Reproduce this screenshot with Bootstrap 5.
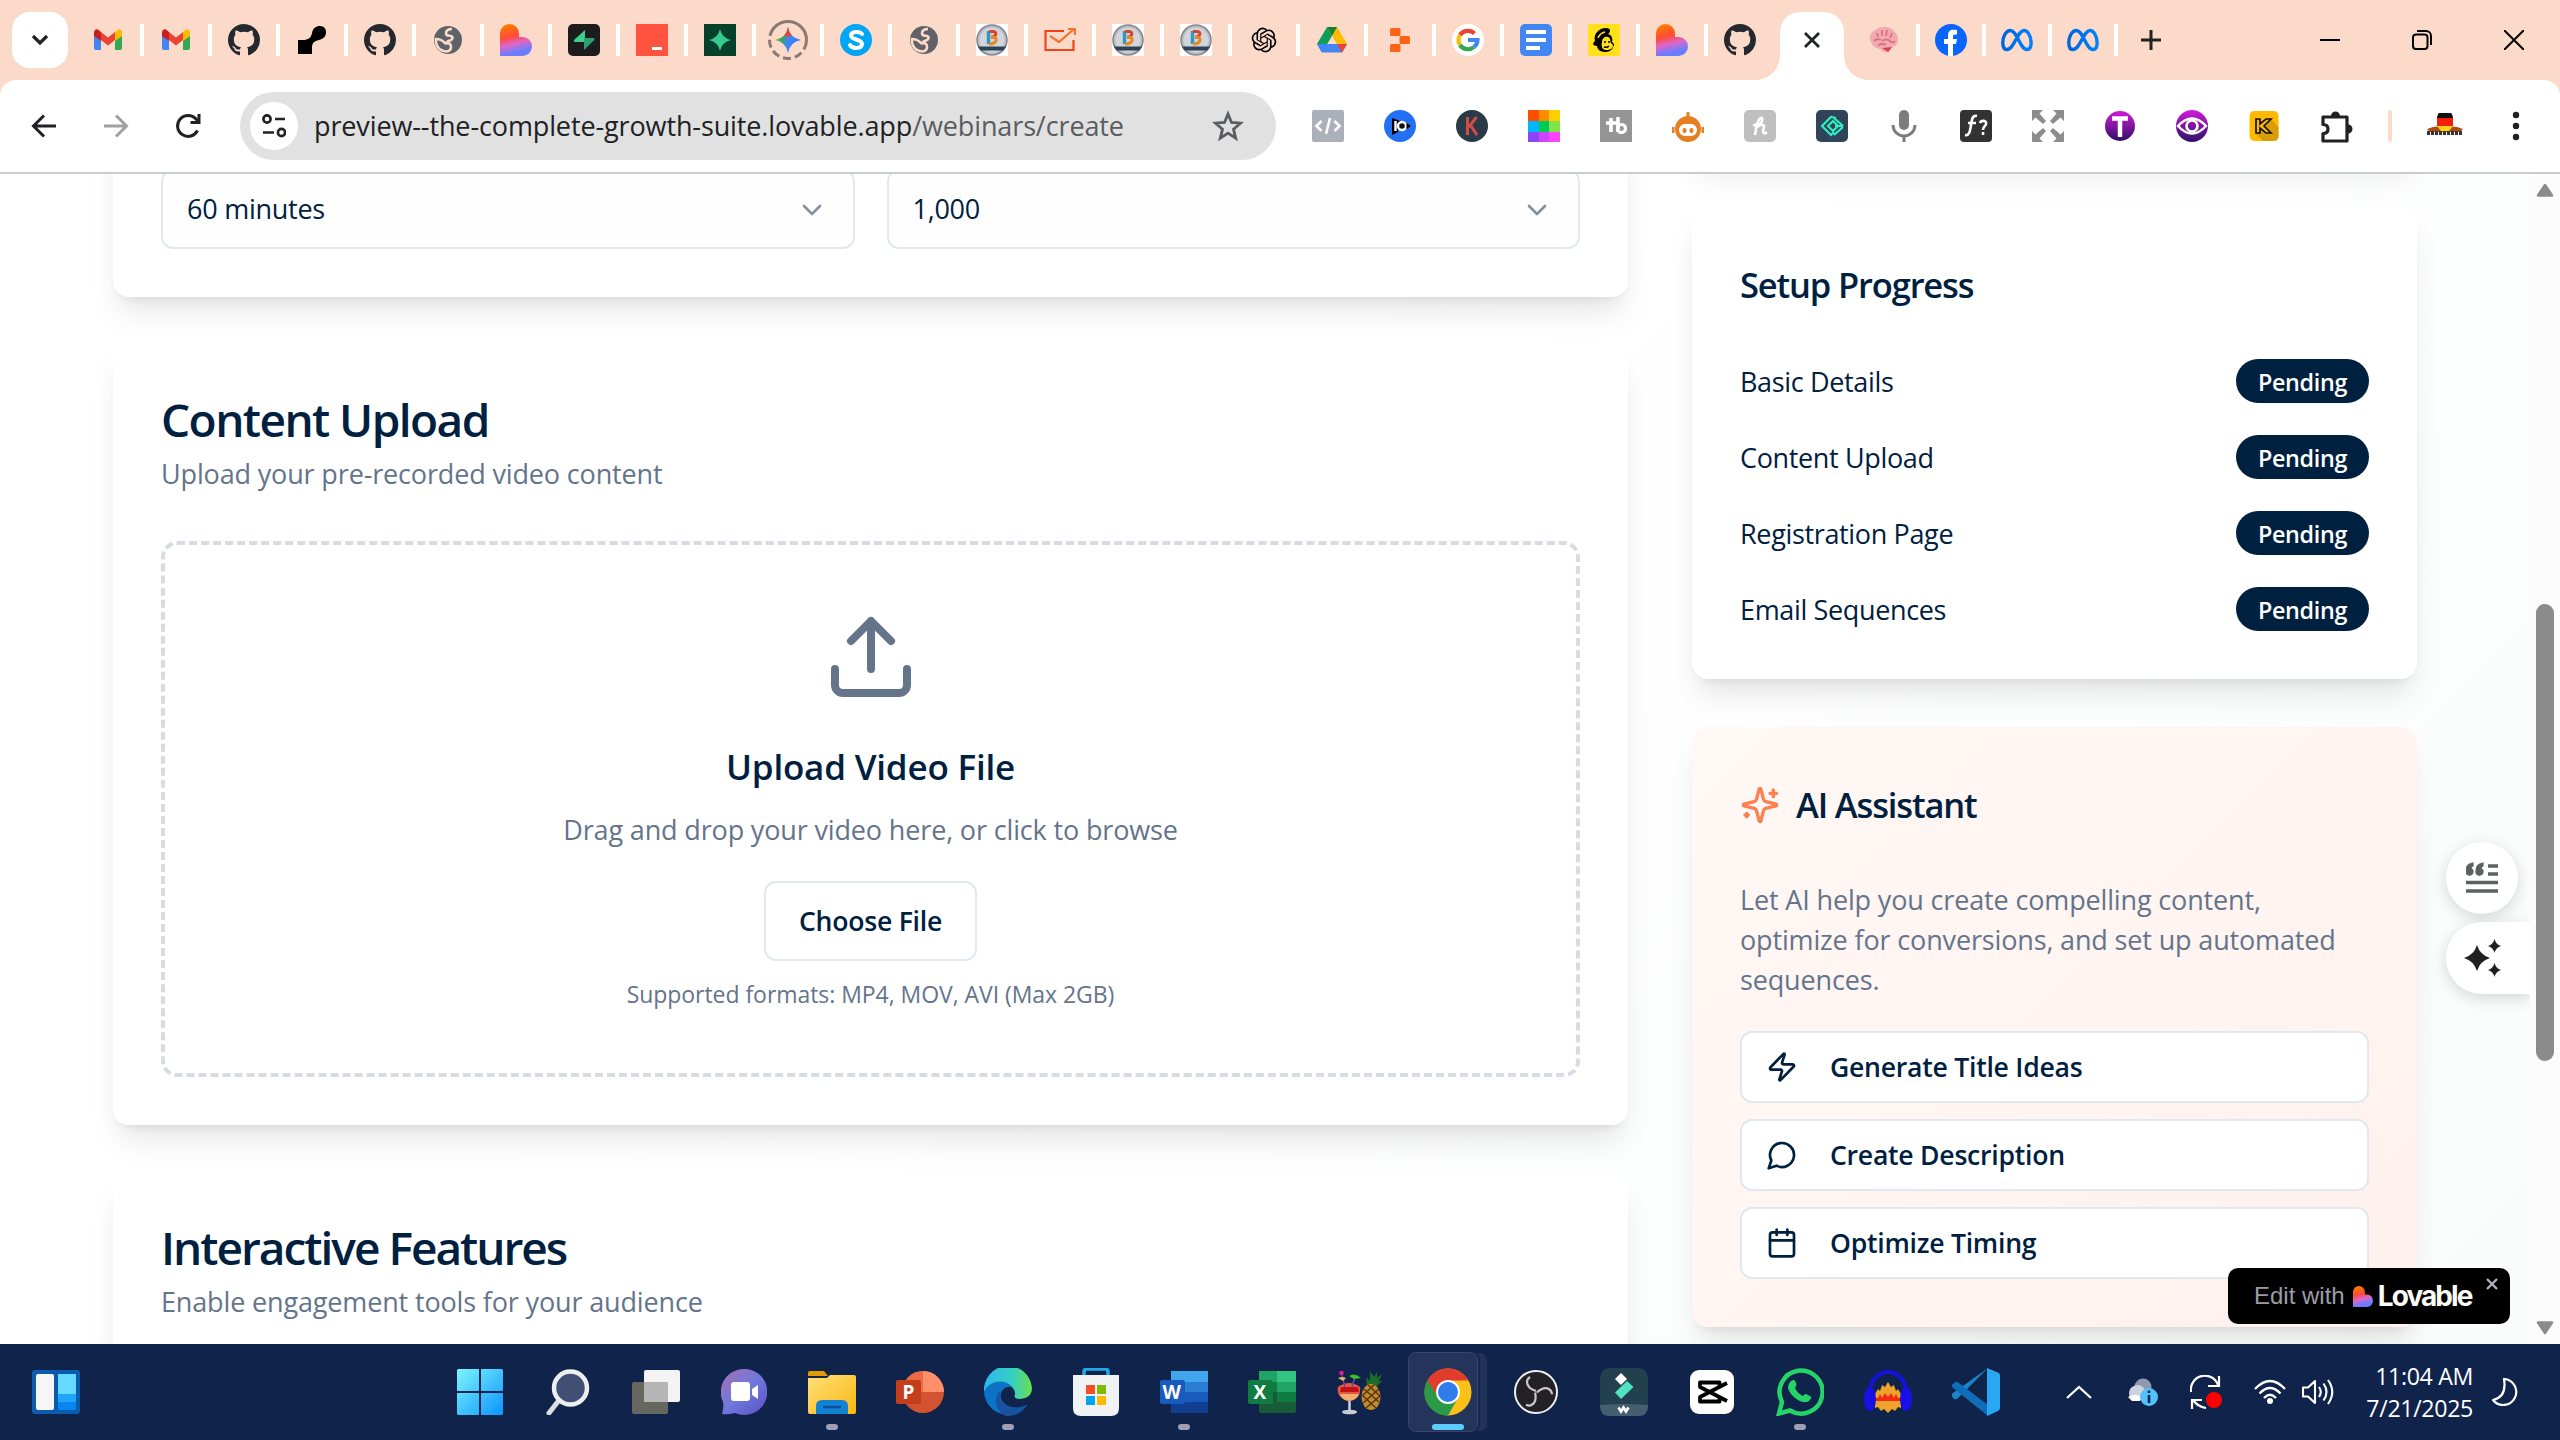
<!DOCTYPE html>
<html lang="en">
<head>
<meta charset="utf-8">
<title>Create webinar</title>
<link href="https://cdn.jsdelivr.net/npm/bootstrap@5.3.0/dist/css/bootstrap.min.css" rel="stylesheet">
<style>
:root{--ink:#00203f;--soft:#64748b;--line:#e2e8f0}
body{width:2560px;height:1440px;overflow:hidden;font-family:"Open Sans","Noto Sans",sans-serif;color:var(--ink);background:#fff}
svg{display:block;flex:none}
.ln{fill:none;stroke:currentColor;stroke-width:2;stroke-linecap:round;stroke-linejoin:round}
/* tab strip */
.strip{height:80px;background:#fcdac9;padding-left:12px}
.tabmenu{width:56px;height:56px;border-radius:18px;background:#fff;margin-right:8px}
.tabcell{width:68px;height:32px;border-right:4px solid #fff}
.tabcell.slim{width:66px}
.tabcell.bare{border-color:transparent}
.tabcell.near{width:66px;border:0}
.livetab{width:64px;height:68px;background:#fff;border-radius:20px 20px 0 0;margin-top:12px;padding-bottom:12px;position:relative;color:#202124}
.livetab:before,.livetab:after{content:"";position:absolute;bottom:0;width:24px;height:24px}
.livetab:before{left:-24px;background:radial-gradient(circle at 0 0,transparent 23.5px,#fff 24px)}
.livetab:after{right:-24px;background:radial-gradient(circle at 100% 0,transparent 23.5px,#fff 24px)}
.wincell{width:92px}
/* toolbar */
.barwrap{background:#fcdac9}
.toolbar{height:94px;background:#fff;border-bottom:2px solid #c9cccd;border-radius:16px 16px 0 0;padding-left:8px;color:#202124}
.navcell{width:72px}
.omni{width:1036px;height:68px;border-radius:34px;background:#e1e1e1;margin-left:16px;padding:0 32px 0 10px;font-size:27px;letter-spacing:-.12px}
.omni .chip{width:48px;height:48px;border-radius:50%;background:#fff;margin-right:16px}
.omni .tail{color:#5a5c5f}
.extcell{width:72px;height:32px}
.extbar{margin-left:16px}
.extrule{width:4px;height:32px;background:#fcdac9;border-radius:2px;margin:0 34px 0 16px}
/* page */
.pagearea{height:1170px;background:linear-gradient(135deg,#fff 40%,#fafcfb)}
.maincol{width:1515px;margin:-53px 64px 0 113px}
.sidecol{width:725px;margin-top:-53px}
.panel{border:0;border-radius:16px;padding:48px;margin-bottom:48px;color:var(--ink);box-shadow:0 20px 30px -6px rgba(0,0,0,.1),0 8px 12px -8px rgba(0,0,0,.1)}
.panel.cut{height:38px;padding:0}
.pick{height:80px;border:2px solid var(--line);border-radius:12px;padding:1px 30px 0 24px;font-size:27px;letter-spacing:-.25px;background:#fefefe}
.pick svg{color:#8490a0}
.h-big{font-size:46px;line-height:48px;font-weight:600;letter-spacing:-1.7px;margin:0 0 12px;padding-top:2px;height:48px}
.h-big.wide{letter-spacing:-1.55px}
.h-big.tight{letter-spacing:-2px}
.sub{font-size:27px;line-height:40px;letter-spacing:-.15px;color:var(--soft);padding-top:1px;margin:0 0 -1px}
.drop{border:4px dashed #d8dbe3;border-radius:16px;margin-top:48px;padding:64px 0}
.drop svg{color:#64748b;margin-bottom:32px}
.drop h3{font-size:35px;line-height:56px;font-weight:600;letter-spacing:-.2px;padding-top:2px;margin:0 0 14px}
.btn.pill{border:2px solid var(--line);border-radius:12px;background:#fff;color:var(--ink);font-size:26.6px;font-weight:600;letter-spacing:-.25px;line-height:40px}
.choose{width:213px;height:80px;margin:32px 0 16px;padding:0}
.note{font-size:23px;line-height:32px;letter-spacing:-.05px;color:var(--soft);padding-top:1px;margin:0 0 -1px}
.h-mid{font-size:34.5px;line-height:56px;font-weight:600;letter-spacing:-1.150px;padding-top:2px;margin:0 0 46px}
.steps{gap:32px}
.steps li{height:44px;font-size:27px;letter-spacing:-.35px;line-height:46px}
.steps li span:first-child{padding-top:2px}
.badge.pend{background:var(--ink);width:133px;height:44px;border-radius:22px;font-size:23.3px;font-weight:600;line-height:47px;padding:0;letter-spacing:-.3px}
.ai{background:linear-gradient(135deg,#fff8f5,#fff1ed)}
.ai .sub{margin-bottom:31px}
.ai .btn{height:72px;padding:0 24px;gap:32px}
.ai .h-mid svg{color:#ff7f50}
/* scrollbar */
.scroller{width:30px;margin-left:auto;background:#fcfcfc;padding:9px 0}
.scroller .thumb{width:18px;height:457px;border-radius:9px;background:#8b8b8b;margin-top:407px}
/* overlays */
.bub{position:absolute;left:2446px;width:72px;height:72px;background:#fff;box-shadow:0 4px 16px rgba(0,0,0,.16)}
.bub.one{top:842px;border-radius:36px;color:#5f6062}
.bub.two{top:922px;width:84px;border-radius:36px 0 0 36px;padding-right:12px;color:#202020;clip-path:inset(-30px 0 -30px -30px)}
.lov{position:absolute;left:2228px;top:1268px;width:282px;height:56px;border-radius:10px;background:#000;color:#9c9ca5;font:24px "Liberation Sans",sans-serif;padding:0 0 0 26px}
.lov b{color:#fcfbf8;font:bold 28px Inter,"Liberation Sans",sans-serif;letter-spacing:-1.9px;margin-left:5px}
.lov .heart{margin-left:8px}
.lov .shut{position:absolute;right:12px;top:10px}
/* taskbar */
.dock{height:96px;background:#10234b;color:#fff}
.widgets{margin:0 356px 0 32px}
.appcell{width:88px;height:96px;position:relative}
.appcell.open:after{content:"";position:absolute;left:38px;top:80px;width:12px;height:6px;border-radius:3px;background:#9a9fb4}
.appcell.live:after{content:"";position:absolute;left:28px;top:80px;width:32px;height:6px;border-radius:3px;background:#5ccbff}
.appcell.live:before{content:"";position:absolute;left:4px;top:8px;width:70px;height:80px;border-radius:8px;background:#24355b;border:1px solid #344567;box-shadow:2px 0 0 #15274e,10px 0 0 -1px #22335a}
.appcell svg{position:relative}
.tray{padding-right:42px}
.when{font-size:23.2px;line-height:32px;width:137px;letter-spacing:-.35px;margin-right:19px}
</style>
<script src="https://cdn.jsdelivr.net/npm/bootstrap@5.3.0/dist/js/bootstrap.bundle.min.js"></script>
</head>
<body class="d-flex flex-column">
<svg width="0" height="0" class="position-absolute">
<defs>
<linearGradient id="gLov" x1="0" y1="0" x2=".25" y2="1"><stop offset=".1" stop-color="#ff7a00"/><stop offset=".45" stop-color="#ff4a3a"/><stop offset=".68" stop-color="#e065c8"/><stop offset=".95" stop-color="#6a7dff"/></linearGradient>
<linearGradient id="gWin" x1="0" y1="0" x2="1" y2="1"><stop stop-color="#7df5ff"/><stop offset="1" stop-color="#0a94ff"/></linearGradient>
<linearGradient id="gPur" x1="0" y1="0" x2="0" y2="1"><stop stop-color="#d21bdc"/><stop offset="1" stop-color="#2c0f62"/></linearGradient>
<linearGradient id="gGem" x1="0" y1="0" x2="1" y2=".3"><stop stop-color="#fbbc04"/><stop offset=".35" stop-color="#34a853"/><stop offset=".6" stop-color="#4285f4"/><stop offset="1" stop-color="#2b7bff"/></linearGradient>
<linearGradient id="gFold" x1="0" y1="0" x2="1" y2="1"><stop stop-color="#ffe07a"/><stop offset="1" stop-color="#fbb80f"/></linearGradient>
<linearGradient id="gChat" x1="0" y1="0" x2="1" y2="1"><stop stop-color="#a76fae"/><stop offset=".5" stop-color="#7078dd"/><stop offset="1" stop-color="#5a4fc4"/></linearGradient>
<linearGradient id="gEdge" x1="0" y1="0" x2="1" y2="0"><stop stop-color="#2fb8f0"/><stop offset=".6" stop-color="#36cfc0"/><stop offset="1" stop-color="#6be04a"/></linearGradient>
<linearGradient id="gMeta" x1="0" y1="0" x2="1" y2="0"><stop stop-color="#0064e0"/><stop offset="1" stop-color="#0082fb"/></linearGradient>
<symbol id="gmail" viewBox="0 0 32 32"><path d="M2 8v16a2 2 0 0 0 2 2h5V13z" fill="#4285f4"/><path d="M30 8v16a2 2 0 0 1-2 2h-5V13z" fill="#34a853"/><path d="M9 8v8l7 5.500 7-5.500V8l-7 5.500z" fill="#ea4335"/><path d="M2 9v3l7 5V8L6 5.600C4 4.400 2 6 2 9z" fill="#c5221f"/><path d="M30 9v3l-7 5V8l3-2.400C28 4.400 30 6 30 9z" fill="#fbbc04"/></symbol>
<symbol id="github" viewBox="0 0 16 16"><path fill="#24292f" d="M8 0C3.580 0 0 3.580 0 8c0 3.540 2.290 6.530 5.470 7.590.4.070.55-.17.55-.38 0-.19-.010-.82-.010-1.490-2.010.37-2.530-.49-2.690-.94-.090-.23-.48-.94-.82-1.130-.28-.15-.68-.52-.010-.53.630-.010 1.080.58 1.230.82.720 1.210 1.870.87 2.330.66.070-.52.280-.87.510-1.070-1.780-.2-3.640-.89-3.640-3.950 0-.87.310-1.590.82-2.150-.080-.2-.36-1.020.080-2.120 0 0 .67-.21 2.200.82.640-.18 1.320-.27 2-.27s1.360.090 2 .27c1.530-1.040 2.200-.82 2.200-.82.440 1.100.160 1.920.080 2.120.510.560.82 1.270.82 2.150 0 3.070-1.870 3.750-3.650 3.950.290.250.540.730.540 1.480 0 1.070-.010 1.930-.010 2.200 0 .21.150.460.550.38A8 8 0 0 0 16 8c0-4.420-3.580-8-8-8z"/></symbol>
<symbol id="curl" viewBox="0 0 32 32"><path d="M2 30V16h5c5 0 8-2 9-7 1-5 4-7 8-7 4 0 6 3 6 6 0 5-3 7-7 8-5 1-7 3-7 8v6z"/></symbol>
<symbol id="globe" viewBox="0 0 32 32"><circle cx="16" cy="16" r="14" fill="#5f6368"/><path d="M20 5c-4 0-6 1.500-6 4.500 0 2.500 3 2 5 2.500 3 1 1 4-1 4.500-1.500.5-3 .5-3 2.500 2 0 4 1 4 4 0 2-1.500 4-4 4.500-6 0-9-3-10.500-7-1-3-.5-4-.5-5.500 4.500 0 6.500 1.500 8.500 3.500 1.500 1.500 3 1 3-.5" fill="none" stroke="#fcdac9" stroke-width="2.600"/></symbol>
<symbol id="lovable" viewBox="0 0 32 32"><path fill="url(#gLov)" d="M0 32V9.500A9.500 9.500 0 0 1 19 9.500V13h3.500a9.500 9.500 0 0 1 0 19z"/></symbol>
<symbol id="supa" viewBox="0 0 32 32"><rect width="32" height="32" rx="5" fill="#1c1c1c"/><path d="M17 6v12H7c-1 0-1.500-1-1-2z" fill="#3ecf8e"/><path d="M16 26V14h9.500c1 0 1.500 1 .8 2z" fill="#2f9e6e"/></symbol>
<symbol id="redbox" viewBox="0 0 32 32"><path d="M0 0h32v32H0z" fill="#ff5340"/><path d="M16 23h10v3H16z" fill="#fff"/></symbol>
<symbol id="greenbox" viewBox="0 0 32 32"><path d="M0 0h32v32H0z" fill="#04402c"/><path d="M16 5q2 9 11 11-9 2-11 11-2-9-11-11 9-2 11-11z" fill="#35c98b"/></symbol>
<symbol id="gem" viewBox="0 0 40 40"><circle cx="20" cy="20" r="18.500" fill="none" stroke="#8b7973" stroke-width="3" stroke-dasharray="10 4 8 4 8 4 8 4 8 4 60 0"/><path d="M20 7q2 11 13 13-11 2-13 13-2-11-13-13 11-2 13-13z" fill="url(#gGem)"/><path d="M20 7q1 6 4 9-4 1-8 0 3-3 4-9z" fill="#ea4335"/></symbol>
<symbol id="skype" viewBox="0 0 32 32"><circle cx="16" cy="16" r="16" fill="#00a5f4"/><path d="M22 10c-2-3-11-3-11 1.500 0 5 11 3 11 8.500 0 5-10 5-12 1" fill="none" stroke="#fff" stroke-width="4" stroke-linecap="round"/></symbol>
<symbol id="bcoin" viewBox="0 0 32 32"><path d="M0 0h32v32H0z" fill="#fff"/><circle cx="16" cy="16" r="15" fill="#b9bcc2" stroke="#85888e" stroke-width="1.500"/><circle cx="16" cy="16" r="12.500" fill="#d3d5da"/><path d="M12.500 7v13" stroke="#2a9bc7" stroke-width="3.400"/><path d="M13 7.500h4q4 .5 2.500 3.500-1 2-4.500 2.500" fill="none" stroke="#d8452e" stroke-width="3"/><path d="M15 13q6 0 5 3.500-1 3.500-7 3.500" stroke="#e78a22" stroke-width="3" fill="none"/><path d="M2 22.500h28q-1 2-3 4H5q-2-2-3-4z" fill="#2c4257"/></symbol>
<symbol id="chk" viewBox="0 0 32 32"><g fill="none" stroke-width="2.200"><path d="M20 7H1.500v19h28V16" stroke="#f0431c"/><path d="m6 12 9 6L30 5M24 5h7v6" stroke="#f5732a"/></g></symbol>
<symbol id="gpt" viewBox="-3.500 -3.500 31 31"><path d="M22.2819 9.8211a5.9847 5.9847 0 0 0-.5157-4.9108 6.0462 6.0462 0 0 0-6.5098-2.9A6.0651 6.0651 0 0 0 4.9807 4.1818a5.9847 5.9847 0 0 0-3.9977 2.9 6.0462 6.0462 0 0 0 .7427 7.0966 5.98 5.98 0 0 0 .511 4.9107 6.051 6.051 0 0 0 6.5146 2.9001A5.9847 5.9847 0 0 0 13.2599 24a6.0557 6.0557 0 0 0 5.7718-4.2058 5.9894 5.9894 0 0 0 3.9977-2.9001 6.0557 6.0557 0 0 0-.7475-7.0729zm-9.022 12.6081a4.4755 4.4755 0 0 1-2.8764-1.0408l.1419-.0804 4.7783-2.7582a.7948.7948 0 0 0 .3927-.6813v-6.7369l2.02 1.1686a.071.071 0 0 1 .038.052v5.5826a4.504 4.504 0 0 1-4.4945 4.4944zm-9.6607-4.1254a4.4708 4.4708 0 0 1-.5346-3.0137l.142.0852 4.783 2.7582a.7712.7712 0 0 0 .7806 0l5.8428-3.3685v2.3324a.0804.0804 0 0 1-.0332.0615L9.74 19.9502a4.4992 4.4992 0 0 1-6.1408-1.6464zM2.3408 7.8956a4.485 4.485 0 0 1 2.3655-1.9728V11.6a.7664.7664 0 0 0 .3879.6765l5.8144 3.3543-2.0201 1.1685a.0757.0757 0 0 1-.071 0l-4.8303-2.7865A4.504 4.504 0 0 1 2.3408 7.872zm16.5963 3.8558L13.1038 8.364 15.1192 7.2a.0757.0757 0 0 1 .071 0l4.8303 2.7913a4.4944 4.4944 0 0 1-.6765 8.1042v-5.6772a.79.79 0 0 0-.407-.667zm2.0107-3.0231l-.142-.0852-4.7735-2.7818a.7759.7759 0 0 0-.7854 0L9.409 9.2297V6.8974a.0662.0662 0 0 1 .0284-.0615l4.8303-2.7866a4.4992 4.4992 0 0 1 6.6802 4.66zM8.3065 12.863l-2.02-1.1638a.0804.0804 0 0 1-.038-.0567V6.0742a4.4992 4.4992 0 0 1 7.3757-3.4537l-.142.0805L8.704 5.459a.7948.7948 0 0 0-.3927.6813zm1.0976-2.3654l2.602-1.4998 2.6069 1.4998v2.9994l-2.5974 1.4997-2.6067-1.4997Z"/></symbol>
<symbol id="drive" viewBox="0 0 32 32"><path d="M11 3h10l10 17H21z" fill="#ffba00"/><path d="M11 3 1 20l5 8.500L16 12z" fill="#0c9d58"/><path d="M11 3h10l-5 9z" fill="#188038"/><path d="M11 20h20l-5 8.500H6L1 20z" fill="#4285f4"/><path d="M21 20h10l-5 8.500z" fill="#ea4335"/></symbol>
<symbol id="orng" viewBox="0 0 32 32" fill="#fb6415"><rect x="6" y="4" width="10.500" height="8" rx="1.500"/><rect x="15.500" y="12" width="10.500" height="8" rx="1.500"/><rect x="6" y="20" width="10.500" height="8" rx="1.500"/></symbol>
<symbol id="goog" viewBox="0 0 32 32"><circle cx="16" cy="16" r="16" fill="#fff"/><g fill="none" stroke-width="4.200"><path d="M22.500 9.500A9.500 9.500 0 0 0 8 11" stroke="#ea4335"/><path d="M8 11a9.500 9.500 0 0 0 0 10" stroke="#fbbc05"/><path d="M8 21a9.500 9.500 0 0 0 14 2" stroke="#34a853"/><path d="M22 23q3.500-3 3.500-7H16" stroke="#4285f4"/></g></symbol>
<symbol id="docs" viewBox="0 0 32 32"><rect width="32" height="32" rx="5" fill="#4285f4"/><path d="M6 6h20v4H6zM6 14h20v4H6zM6 22h14v4H6z" fill="#fff"/></symbol>
<symbol id="chimp" viewBox="0 0 32 32"><rect width="32" height="32" rx="2" fill="#ffe01b"/><path d="M7 17C5 10 11 4 18 4c5 0 5 4 2 6 4 1 5 5 4 8 3 2 2 4 1 5-1 4-5 5-8 5-6 0-8-4-8-6-4 0-5-3-2-5z"/><path d="M14 18c0-4 3-6 6-5 3 1 2 4 3 6l2 2c0 4-3 5-7 5s-5-4-4-8z" fill="#ffe01b"/><path d="M16 18h2m2 0h2m-6 5q3 1 5-1" stroke="#000" stroke-width="1.500" fill="none"/><path d="M10 14q2-5 7-6" stroke="#ffe01b" stroke-width="1.500" fill="none"/></symbol>
<symbol id="brain" viewBox="0 0 32 32"><path d="M3 18C0 12 4 7 9 5c6-4 14-2 18 3 4 4 4 11 0 14l-4 2c0 5-5 5-9 3-1-3-9-2-11-9z" fill="#f3a9b0"/><path d="M6 17q3-3 7-1M9 9l1 4M14 6v6M19 6l-1 6M24 9l-2 5M14 17q5-3 8 0t5 0M10 21q5-2 8 0" stroke="#d9727f" stroke-width="1.800" fill="none"/><path d="m14 24 10-1-4 5z" fill="#d9404f"/></symbol>
<symbol id="fb" viewBox="0 0 32 32"><circle cx="16" cy="16" r="16" fill="#0866ff"/><path d="M13 32V20H9v-5h4v-3c0-6 3-7 9-6v4.500c-3 0-4 0-4 2.500v2h4l-1 5h-3v12z" fill="#fff"/></symbol>
<symbol id="meta" viewBox="0 0 32 32"><path d="M2 21C1 13 5 6.500 9.500 6.500 16 6.500 19 25.500 26 25.500c3 0 4.500-3 4-8C29.500 11 26.500 6.500 23 6.500 16.500 6.500 13 25.500 6 25.500 4 25.500 2.300 24 2 21z" fill="none" stroke="url(#gMeta)" stroke-width="3.400"/></symbol>
<symbol id="bot" viewBox="0 0 32 32"><path d="M16 2v5M1 17v6M31 17v6" stroke="#e67e22" stroke-width="3"/><circle cx="16" cy="19" r="13" fill="#e67e22"/><rect x="7" y="14" width="18" height="12" rx="6" fill="#fff"/><rect x="10.500" y="18" width="4" height="5" rx="2" fill="#e67e22"/><rect x="17.500" y="18" width="4" height="5" rx="2" fill="#e67e22"/></symbol>
<symbol id="spark" viewBox="0 0 24 24"><path class="ln" d="M9.937 15.500A2 2 0 0 0 8.500 14.063l-6.135-1.582a.5.5 0 0 1 0-.962L8.500 9.936A2 2 0 0 0 9.937 8.500l1.582-6.135a.5.5 0 0 1 .963 0L14.063 8.500A2 2 0 0 0 15.500 9.937l6.135 1.581a.5.5 0 0 1 0 .964L15.500 14.063a2 2 0 0 0-1.437 1.437l-1.582 6.135a.5.5 0 0 1-.963 0zM20 3v4M22 5h-4M4 17v2M5 18H3"/></symbol>
</defs></svg>

<header class="strip d-flex align-items-center">
<div class="tabmenu d-flex align-items-center justify-content-center"><svg width="18" height="12" viewBox="0 0 18 12"><path d="m2 2 7 7 7-7" fill="none" stroke="#202124" stroke-width="3.200"/></svg></div>
<div class="tabcell d-flex justify-content-center"><svg width="32" height="32"><use href="#gmail"/></svg></div>
<div class="tabcell d-flex justify-content-center"><svg width="32" height="32"><use href="#gmail"/></svg></div>
<div class="tabcell d-flex justify-content-center"><svg width="32" height="32"><use href="#github"/></svg></div>
<div class="tabcell d-flex justify-content-center"><svg width="32" height="32"><use href="#curl"/></svg></div>
<div class="tabcell d-flex justify-content-center"><svg width="32" height="32"><use href="#github"/></svg></div>
<div class="tabcell d-flex justify-content-center"><svg width="32" height="32"><use href="#globe"/></svg></div>
<div class="tabcell d-flex justify-content-center"><svg width="32" height="32"><use href="#lovable"/></svg></div>
<div class="tabcell d-flex justify-content-center"><svg width="32" height="32"><use href="#supa"/></svg></div>
<div class="tabcell d-flex justify-content-center"><svg width="32" height="32"><use href="#redbox"/></svg></div>
<div class="tabcell d-flex justify-content-center"><svg width="32" height="32"><use href="#greenbox"/></svg></div>
<div class="tabcell d-flex justify-content-center align-items-center"><svg width="40" height="40"><use href="#gem"/></svg></div>
<div class="tabcell d-flex justify-content-center"><svg width="32" height="32"><use href="#skype"/></svg></div>
<div class="tabcell d-flex justify-content-center"><svg width="32" height="32"><use href="#globe"/></svg></div>
<div class="tabcell d-flex justify-content-center"><svg width="32" height="32"><use href="#bcoin"/></svg></div>
<div class="tabcell d-flex justify-content-center"><svg width="32" height="32"><use href="#chk"/></svg></div>
<div class="tabcell d-flex justify-content-center"><svg width="32" height="32"><use href="#bcoin"/></svg></div>
<div class="tabcell d-flex justify-content-center"><svg width="32" height="32"><use href="#bcoin"/></svg></div>
<div class="tabcell d-flex justify-content-center"><svg width="32" height="32"><use href="#gpt"/></svg></div>
<div class="tabcell d-flex justify-content-center"><svg width="32" height="32"><use href="#drive"/></svg></div>
<div class="tabcell d-flex justify-content-center"><svg width="32" height="32"><use href="#orng"/></svg></div>
<div class="tabcell d-flex justify-content-center"><svg width="32" height="32"><use href="#goog"/></svg></div>
<div class="tabcell d-flex justify-content-center"><svg width="32" height="32"><use href="#docs"/></svg></div>
<div class="tabcell d-flex justify-content-center"><svg width="32" height="32"><use href="#chimp"/></svg></div>
<div class="tabcell d-flex justify-content-center"><svg width="32" height="32"><use href="#lovable"/></svg></div>
<div class="tabcell bare d-flex justify-content-center"><svg width="32" height="32"><use href="#github"/></svg></div>
<div class="ms-1 livetab d-flex align-items-center justify-content-center"><svg width="18" height="18" viewBox="0 0 18 18"><path d="m2 2 14 14M16 2 2 16" stroke="#202124" stroke-width="2.800"/></svg></div>
<div class="tabcell d-flex justify-content-center ms-2"><svg width="32" height="32"><use href="#brain"/></svg></div>
<div class="tabcell slim d-flex justify-content-center"><svg width="32" height="32"><use href="#fb"/></svg></div>
<div class="tabcell slim d-flex justify-content-center"><svg width="32" height="32"><use href="#meta"/></svg></div>
<div class="tabcell slim d-flex justify-content-center"><svg width="32" height="32"><use href="#meta"/></svg></div>
<div class="tabcell near d-flex justify-content-center align-items-center"><svg width="20" height="20" viewBox="0 0 20 20"><path d="M10 0v20M0 10h20" stroke="#202124" stroke-width="3"/></svg></div>
<div class="ms-auto d-flex">
<div class="wincell d-flex align-items-center justify-content-center"><svg width="20" height="20" viewBox="0 0 20 20"><path d="M0 10h20" stroke="#000" stroke-width="2"/></svg></div>
<div class="wincell d-flex align-items-center justify-content-center"><svg width="20" height="20" viewBox="0 0 20 20"><g fill="none" stroke="#000" stroke-width="2"><rect x="1" y="4.500" width="14.500" height="14.500" rx="3"/><path d="M5 1h9a5 5 0 0 1 5 5v9"/></g></svg></div>
<div class="wincell d-flex align-items-center justify-content-center"><svg width="20" height="20" viewBox="0 0 20 20"><path d="m0 0 20 20M20 0 0 20" stroke="#000" stroke-width="2"/></svg></div>
</div>
</header>

<div class="barwrap">
<nav class="toolbar d-flex align-items-center">
<div class="navcell d-flex justify-content-center"><svg width="26" height="24" viewBox="0 0 26 24"><path d="M25 12H3M13 1.500 2.500 12 13 22.500" fill="none" stroke="#202124" stroke-width="3"/></svg></div>
<div class="navcell d-flex justify-content-center"><svg width="26" height="24" viewBox="0 0 26 24"><path d="M1 12h22M13 1.500 23.500 12 13 22.500" fill="none" stroke="#a0a0a0" stroke-width="3"/></svg></div>
<div class="navcell d-flex justify-content-center"><svg width="26" height="26" viewBox="0 0 26 26"><path d="M22.500 17.500A10.500 10.500 0 1 1 21 6l3 3M24 1v8.500h-8.500" fill="none" stroke="#202124" stroke-width="3"/></svg></div>
<div class="omni d-flex align-items-center">
<span class="chip d-flex align-items-center justify-content-center"><svg width="24" height="24" viewBox="0 0 24 24"><g fill="none" stroke="#202124" stroke-width="2.600"><circle cx="5" cy="5" r="3.600"/><path d="M13 5h10M1 18.500h11"/><circle cx="19.500" cy="18.500" r="3.600"/></g></svg></span>
<span>preview--the-complete-growth-suite.lovable.app<span class="tail">/webinars/create</span></span>
<svg class="ms-auto" width="32" height="32" viewBox="0 0 32 32"><path d="m16 4 3.500 8.500 9 .7-7 6 2.200 9-7.700-5-7.700 5 2.200-9-7-6 9-.7z" fill="none" stroke="#5a5c5f" stroke-width="2.800"/></svg>
</div>
<div class="extbar d-flex">
<div class="extcell d-flex justify-content-center"><svg width="32" height="32" viewBox="0 0 32 32"><rect width="32" height="32" rx="2" fill="#abb0bb"/><path d="m9.500 11-5 5 5 5m13-10 5 5-5 5M18 8l-4 16" fill="none" stroke="#fff" stroke-width="2.600"/></svg></div>
<div class="extcell d-flex justify-content-center"><svg width="32" height="32" viewBox="0 0 32 32"><circle cx="16" cy="16" r="16" fill="#2470f5"/><path d="m8 8 8 3-2 11-6 3z"/><path d="M11.500 11v10" stroke="#fff" stroke-width="2.400"/><circle cx="18" cy="16" r="4" fill="#111" stroke="#fff" stroke-width="2.400"/><path d="m22.500 13 4.500 3-4.500 3z"/></svg></div>
<div class="extcell d-flex justify-content-center"><svg width="32" height="32" viewBox="0 0 32 32"><circle cx="16" cy="16" r="16" fill="#2b3a47"/><path d="M11.500 7v18M20.500 7 13 17l2-1 6 9" fill="none" stroke="#d44c49" stroke-width="3"/></svg></div>
<div class="extcell d-flex justify-content-center"><svg width="32" height="32" viewBox="0 0 32 32"><path d="M0 0h11v11H0z" fill="#ff4e00"/><path d="M11 0h10v11H11z" fill="#ff8c00"/><path d="M21 0h11v11H21z" fill="#ffd000"/><path d="M0 11h11v11H0z" fill="#00b7ff"/><path d="M11 11h10v11H11z" fill="#00cc55"/><path d="M21 11h11v11H21z" fill="#7fe34a"/><path d="M0 22h11v10H0z" fill="#8a45ff"/><path d="M11 22h10v10H11z" fill="#cc44ff"/><path d="M21 22h11v10H21z" fill="#ff44ff"/></svg></div>
<div class="extcell d-flex justify-content-center"><svg width="32" height="32" viewBox="0 0 32 32"><path d="M0 0h32v32H0z" fill="#959595"/><path d="M6 13h11M11 8v14M18 7v15" stroke="#fff" stroke-width="3.600"/><circle cx="21.500" cy="18.500" r="4" fill="none" stroke="#fff" stroke-width="3.200"/></svg></div>
<div class="extcell d-flex justify-content-center"><svg width="32" height="32"><use href="#bot"/></svg></div>
<div class="extcell d-flex justify-content-center"><svg width="32" height="32" viewBox="0 0 32 32"><rect width="32" height="32" rx="5" fill="#bfbfbf"/><path d="M11 25q1-8 3-13 2-5 4-4 2 3-5 9 6-4 7-1 0 2-1 5 0 4 4 1M9 15q3 1 6-5" fill="none" stroke="#fff" stroke-width="2.600"/></svg></div>
<div class="extcell d-flex justify-content-center"><svg width="32" height="32" viewBox="0 0 32 32"><rect width="32" height="32" rx="5" fill="#30435a"/><path d="m20 8-5-1-9 9 9 9 3-3m-6-6 5-5 5 5-5 5zM18 8l9 8m0 0h-8m8 1-9 8" fill="none" stroke="#2cf0c0" stroke-width="2.200"/></svg></div>
<div class="extcell d-flex justify-content-center"><svg width="32" height="32" viewBox="0 0 32 32"><rect x="11" y="0" width="10" height="20" rx="5" fill="#7d7d7d"/><path d="M5 15a11 11 0 0 0 22 0M16 26v6" fill="none" stroke="#7d7d7d" stroke-width="3"/></svg></div>
<div class="extcell d-flex justify-content-center"><svg width="32" height="32" viewBox="0 0 32 32"><rect width="32" height="32" rx="4" fill="#333"/><path d="M17 6c-4-1-5 2-6 9s-2 11-6 10M8 13h8M20 13c1-3 7-3 6 1 0 2-3 2-3 6m0 2v3" fill="none" stroke="#fff" stroke-width="2.600"/></svg></div>
<div class="extcell d-flex justify-content-center"><svg width="32" height="32" viewBox="0 0 32 32"><path d="M0 0h11L7.500 3.500 14 11l-3 3-7.500-6.500L0 11zM32 0v11l-3.500-3.500L21 14l-3-3 6.500-7.500L21 0zM0 32V21l3.500 3.500L11 18l3 3-6.500 7.500L11 32zM32 32H21l3.500-3.500L18 21l3-3 7.500 6.500L32 21z" fill="#8c8c8c"/></svg></div>
<div class="extcell d-flex justify-content-center"><svg width="32" height="32" viewBox="0 0 32 32"><circle cx="16" cy="16" r="15" fill="url(#gPur)"/><path d="M8 8.500h16M16 8v19" stroke="#fff" stroke-width="4.500"/></svg></div>
<div class="extcell d-flex justify-content-center"><svg width="32" height="32" viewBox="0 0 32 32"><circle cx="16" cy="16" r="16" fill="url(#gPur)"/><path d="M2 16Q16 1 30 16 16 31 2 16z" fill="none" stroke="#fff" stroke-width="2.400"/><circle cx="16" cy="16" r="5.500" fill="none" stroke="#fff" stroke-width="2.600"/></svg></div>
<div class="extcell d-flex justify-content-center"><svg width="32" height="32" viewBox="0 0 32 32"><rect x="1.500" y="1" width="29" height="30" rx="5" fill="#ffba00"/><path d="m22 8 8.500 9v9q0 5-5 5H15l-7-7z" fill="#d99e05"/><path d="M8 9v14h4v-5l6 5h5l-7-7 7-7h-5l-6 5V9z" fill="#ffba00" stroke="#111" stroke-width="1.700"/></svg></div>
<div class="extcell d-flex justify-content-center"><svg width="34" height="34" viewBox="0 0 34 34"><path d="M4 7h24v24H4v-7.500q5 0 5-4.500t-5-4.500z" fill="none" stroke="#202124" stroke-width="3.200" stroke-linejoin="round"/><path d="M12 6a4.500 4.500 0 0 1 9 0zM29 14.500a4.500 4.500 0 0 1 0 9z" fill="#202124"/></svg></div>
</div>
<div class="extrule"></div>
<svg width="38" height="26" viewBox="0 0 38 26"><path d="M11 5a8 8 0 0 1 16 0z" fill="#111"/><path d="M11 5h16v8H11z" fill="#f51d0c"/><path d="M1 16q9-4 18-2 9-2 18 2l-3 3H4z" fill="#b14a14"/><path d="M11 13h16l-4 5h-8z" fill="#ffd21a"/><path d="M1 20h36" stroke="#333" stroke-width="4" stroke-dasharray="3 1"/></svg>
<svg class="ms-5" width="8" height="30" viewBox="0 0 8 30" fill="#202124"><circle cx="4" cy="4" r="3.200"/><circle cx="4" cy="15" r="3.200"/><circle cx="4" cy="26" r="3.200"/></svg>
</nav>
</div>

<main class="pagearea d-flex overflow-hidden">
<div class="maincol">
<section class="card panel">
<div class="d-flex" style="gap:32px">
<div class="pick d-flex align-items-center justify-content-between flex-fill w-50"><span>60 minutes</span><svg width="22" height="14" viewBox="0 0 22 14"><path class="ln" style="stroke-width:2.600" d="m3 3 8 8 8-8"/></svg></div>
<div class="pick d-flex align-items-center justify-content-between flex-fill w-50"><span>1,000</span><svg width="22" height="14" viewBox="0 0 22 14"><path class="ln" style="stroke-width:2.600" d="m3 3 8 8 8-8"/></svg></div>
</div>
</section>
<section class="card panel">
<h2 class="h-big wide">Content Upload</h2>
<p class="sub">Upload your pre-recorded video content</p>
<div class="drop d-flex flex-column align-items-center">
<svg width="96" height="96" viewBox="0 0 24 24"><path class="ln" d="M21 15v4a2 2 0 0 1-2 2H5a2 2 0 0 1-2-2v-4M17 8l-5-5-5 5M12 3v12"/></svg>
<h3>Upload Video File</h3>
<p class="sub">Drag and drop your video here, or click to browse</p>
<button class="btn pill choose">Choose File</button>
<p class="note">Supported formats: MP4, MOV, AVI (Max 2GB)</p>
</div>
</section>
<section class="card panel">
<h2 class="h-big tight">Interactive Features</h2>
<p class="sub">Enable engagement tools for your audience</p>
</section>
</div>
<aside class="sidecol">
<section class="card panel cut"></section>
<section class="card panel">
<h3 class="h-mid">Setup Progress</h3>
<ul class="steps list-unstyled d-flex flex-column mb-0">
<li class="d-flex align-items-center justify-content-between"><span>Basic Details</span><span class="badge pend">Pending</span></li>
<li class="d-flex align-items-center justify-content-between"><span>Content Upload</span><span class="badge pend">Pending</span></li>
<li class="d-flex align-items-center justify-content-between"><span>Registration Page</span><span class="badge pend">Pending</span></li>
<li class="d-flex align-items-center justify-content-between"><span>Email Sequences</span><span class="badge pend">Pending</span></li>
</ul>
</section>
<section class="card panel ai">
<h3 class="h-mid d-flex align-items-center gap-3"><svg width="40" height="40"><use href="#spark"/></svg><span>AI Assistant</span></h3>
<p class="sub">Let AI help you create compelling content,<br>optimize for conversions, and set up automated<br>sequences.</p>
<div class="d-flex flex-column gap-3">
<button class="btn pill d-flex align-items-center"><svg width="32" height="32" viewBox="0 0 24 24"><path class="ln" d="M4 14a1 1 0 0 1-.78-1.630l9.900-10.200a.5.5 0 0 1 .86.460l-1.920 6.020A1 1 0 0 0 13 10h7a1 1 0 0 1 .78 1.630l-9.900 10.200a.5.5 0 0 1-.86-.460l1.920-6.020A1 1 0 0 0 11 14z"/></svg><span>Generate Title Ideas</span></button>
<button class="btn pill d-flex align-items-center"><svg width="32" height="32" viewBox="0 0 24 24"><path class="ln" d="M7.900 20A9 9 0 1 0 4 16.100L2 22z"/></svg><span>Create Description</span></button>
<button class="btn pill d-flex align-items-center"><svg width="32" height="32" viewBox="0 0 24 24"><g class="ln"><path d="M8 2v4M16 2v4M3 10h18"/><rect x="3" y="4" width="18" height="18" rx="2"/></g></svg><span>Optimize Timing</span></button>
</div>
</section>
</aside>
<div class="scroller d-flex flex-column align-items-center">
<svg width="18" height="14" viewBox="0 0 18 14"><path d="M2 12.500 9 2l7 10.500z" fill="#8b8b8b" stroke="#8b8b8b" stroke-width="2.500" stroke-linejoin="round"/></svg>
<div class="thumb"></div>
<svg class="mt-auto" width="18" height="14" viewBox="0 0 18 14"><path d="M2 1.500 9 12l7-10.500z" fill="#8b8b8b" stroke="#8b8b8b" stroke-width="2.500" stroke-linejoin="round"/></svg>
</div>
</main>

<footer class="dock d-flex align-items-center">
<svg class="widgets" width="48" height="44" viewBox="0 0 48 44"><rect width="48" height="44" rx="3" fill="#0b5cad"/><rect x="4" y="4" width="18" height="36" rx="2" fill="#f6f6f6"/><rect x="26" y="4" width="18" height="20" fill="#66d9ff"/><rect x="26" y="24" width="18" height="8" fill="#1fa5fb"/><rect x="26" y="32" width="18" height="8" rx="1" fill="#0a84ef"/></svg>
<div class="appcell d-flex align-items-center justify-content-center"><svg width="46" height="46" viewBox="0 0 46 46"><path d="M1 0h21v22H0V1zM24 0h21l1 1v21H24zM0 24h22v22H1l-1-1zM24 24h22v21l-1 1H24z" fill="url(#gWin)"/></svg></div>
<div class="appcell d-flex align-items-center justify-content-center"><svg width="44" height="46" viewBox="0 0 44 46"><path d="m14 30-11 14" stroke="#dcdfe2" stroke-width="5" stroke-linecap="round"/><circle cx="24.500" cy="19" r="16.500" fill="#414f75" stroke="#eceeef" stroke-width="4.500"/></svg></div>
<div class="appcell d-flex align-items-center justify-content-center"><svg width="48" height="44" viewBox="0 0 48 44"><rect y="12" width="36" height="32" rx="2" fill="#66675f"/><rect x="12" width="36" height="32" rx="2" fill="#f3f3f3"/><path d="M12 12h24v20H12z" fill="#b4b5b4"/></svg></div>
<div class="appcell d-flex align-items-center justify-content-center"><svg width="46" height="46" viewBox="0 0 46 46"><path d="M23 0a23 23 0 1 1-9 44q-7 2-13 1 2-6 1-12A23 23 0 0 1 23 0z" fill="url(#gChat)"/><rect x="10" y="13" width="19" height="19" rx="3" fill="#fff"/><path d="m31 20 6-4v14l-6-4z" fill="#fff"/></svg></div>
<div class="appcell open d-flex align-items-center justify-content-center"><svg width="48" height="44" viewBox="0 0 48 44"><path d="M0 3q0-2 2-2h14l4 5H0z" fill="#e09c00"/><path d="M0 8h19l3-3h24q2 0 2 2v35q0 2-2 2H2q-2 0-2-2z" fill="url(#gFold)"/><path d="M8 44V36q0-6 6-6h20q6 0 6 6v8z" fill="#1380d2"/><path d="M15 37h18" stroke="#0b559e" stroke-width="2.500"/></svg></div>
<div class="appcell d-flex align-items-center justify-content-center"><svg width="48" height="44" viewBox="0 0 48 44"><circle cx="27" cy="22" r="21" fill="#d35230"/><path d="M27 1a21 21 0 0 1 21 21H27z" fill="#ff8f6b"/><path d="M27 1v21H6A21 21 0 0 1 27 1z" fill="#ed6c47"/><rect y="10" width="25" height="24" rx="2" fill="#c43e1c"/><text x="6.500" y="28.500" font-size="19" font-weight="700" fill="#fff">P</text></svg></div>
<div class="appcell open d-flex align-items-center justify-content-center"><svg width="48" height="48" viewBox="0 0 48 48"><path d="M0 24A24 24 0 0 1 48 20q0 10-12 11-7 0-5-5C32 16 12 10 0 24z" fill="url(#gEdge)"/><path d="M0 24c4-12 22-14 28-5-8-2-14 6-10 15 5 10 17 9 26 2A24 24 0 0 1 0 24z" fill="#0c73c6"/><path d="M17 22c-3 12 8 22 26 15A24 24 0 0 1 22 48C10 42 9 28 17 22z" fill="#1753a0"/></svg></div>
<div class="appcell d-flex align-items-center justify-content-center"><svg width="46" height="48" viewBox="0 0 46 48"><path d="M11 10V4q0-3 3-3h18q3 0 3 3v6" fill="none" stroke="#21a8ee" stroke-width="3.500"/><path d="M0 7h46v33q0 8-8 8H8q-8 0-8-8z" fill="#f1f2f3"/><path d="M13 17h9v9h-9z" fill="#f25022"/><path d="M24 17h9v9h-9z" fill="#7fba00"/><path d="M13 28h9v9h-9z" fill="#00a4ef"/><path d="M24 28h9v9h-9z" fill="#ffb900"/></svg></div>
<div class="appcell open d-flex align-items-center justify-content-center"><svg width="48" height="44" viewBox="0 0 48 44"><rect x="11" y="1" width="37" height="42" rx="2" fill="#2b7cd3"/><path d="M11 1h37v11H11z" fill="#41a5ee"/><path d="M11 22h37v10H11z" fill="#185abd"/><path d="M11 32h37v11H11z" fill="#103f91"/><rect y="10" width="25" height="24" rx="2" fill="#185abd"/><text x="2.500" y="29" font-size="19" font-weight="700" fill="#fff">W</text></svg></div>
<div class="appcell d-flex align-items-center justify-content-center"><svg width="48" height="44" viewBox="0 0 48 44"><rect x="11" y="1" width="37" height="42" rx="2" fill="#185c37"/><path d="M11 1h18v11H11z" fill="#21a366"/><path d="M29 1h19v11H29z" fill="#33c481"/><path d="M29 12h19v10H29z" fill="#21a366"/><path d="M11 12h18v10H11zM29 22h19v10H29z" fill="#107c41"/><rect y="10" width="25" height="24" rx="2" fill="#107c41"/><text x="5.500" y="29" font-size="19" font-weight="700" fill="#fff">X</text></svg></div>
<div class="appcell d-flex align-items-center justify-content-center"><svg width="46" height="46" viewBox="0 0 46 46"><path d="m30 16-1-8 4 4V2l4 6 3-5v6l5-4-3 7 3 0-6 6z" fill="#1f6b28"/><ellipse cx="34" cy="28" rx="9.500" ry="13" fill="#c28a2a"/><path d="m27 20 15 13M25 26l14 13M31 16l12 11M42 20 26 34M37 16 25 27M43 27 29 39" stroke="#4f3209" stroke-width="1.300"/><path d="M1 18q11-8 22 0 2 12-11 14Q-1 30 1 18z" fill="#e05a48"/><path d="M4 18h17l1 5H3z" fill="#c41212"/><path d="M3 25h19q-2 6-10 7-7-1-9-7z" fill="#f4b06a"/><path d="M12.500 32v10" stroke="#c8cbd8" stroke-width="2.600"/><ellipse cx="12.500" cy="43" rx="7.500" ry="2.300" fill="#c8cbd8"/><path d="M8 18 5 6" stroke="#7a3aa0" stroke-width="1.600"/><circle cx="4.500" cy="4" r="2.300" fill="#e8189a"/><path d="M1 9q4-2 8 0l-3 3z" fill="#c9c36a"/><path d="m15 18 3-10" stroke="#5a4bb0" stroke-width="1.600"/><path d="M12 7q6-4 12 2l-7 1z" fill="#3fc41c"/></svg></div>
<div class="appcell live d-flex align-items-center justify-content-center"><svg width="48" height="48" viewBox="0 0 48 48"><circle cx="24" cy="24" r="23.500" fill="#fbc116"/><path d="M24 24 3.500 12.500A23.500 23.500 0 0 0 24 47.500L34 30z" fill="#2a9a48"/><path d="M3.500 12.200A23.500 23.500 0 0 1 44.500 12.500H24L14 29z" fill="#e33b2e"/><circle cx="24" cy="24" r="12" fill="#fff"/><circle cx="24" cy="24" r="10" fill="#2f7de9"/></svg></div>
<div class="appcell d-flex align-items-center justify-content-center"><svg width="46" height="46" viewBox="0 0 46 46"><circle cx="23" cy="23" r="21" fill="#232126" stroke="#f0f0f0" stroke-width="2"/><g fill="none" stroke="#c9c9cc" stroke-width="2.200"><path id="ob" d="M23 22q-9-3-9-9 0-3 3-5"/><use href="#ob" transform="rotate(120 23 23)"/><use href="#ob" transform="rotate(240 23 23)"/></g></svg></div>
<div class="appcell d-flex align-items-center justify-content-center"><svg width="48" height="48" viewBox="0 0 48 48"><rect width="48" height="48" rx="10" fill="#22404d"/><path d="M0 37q24-2 48 0v1q0 10-10 10H10Q0 48 0 38z" fill="#455f70"/><path d="m15 11 6-6 6 6-6 6z" fill="#fff"/><path d="m27 13 6.500 6L21 31l-6-6.500z" fill="#50e3c2"/><path d="m18.500 39.500 2.500 4 2.500-4 2.500 4 2.500-4" fill="none" stroke="#fff" stroke-width="2.600"/></svg></div>
<div class="appcell d-flex align-items-center justify-content-center"><svg width="44" height="44" viewBox="0 0 44 44"><rect width="44" height="44" rx="9" fill="#fff"/><path d="M37 13 10 27v4.500h19.500V27M37 31 10 17v-4.500h19.500V17" fill="none" stroke="#000" stroke-width="3.800" stroke-linejoin="round"/></svg></div>
<div class="appcell open d-flex align-items-center justify-content-center"><svg width="48" height="48" viewBox="0 0 48 48"><path d="M3 45.500 6 34A21.500 21.500 0 1 1 14 42.500z" fill="none" stroke="#25d366" stroke-width="4.500"/><path d="M15 13c3-2 4-1 5 2 1 3 0 3-1 5 2 4 4 6 8 8 2-2 2-3 5-1 4 2 4 2 2 5-3 3-7 3-12 0-5-3-9-8-10-12 0-3 1-5 3-7z" fill="#25d366"/></svg></div>
<div class="appcell d-flex align-items-center justify-content-center"><svg width="48" height="44" viewBox="0 0 48 44"><path d="M6 26C4-6 44-6 42 26" fill="none" stroke="#1410e0" stroke-width="4"/><path d="M11 38V24l3-5 2 2 2-6 3 2 3-5 3 5 3-2 2 6 2-2 3 5v14l-3-1-3 4-3-2-4 4-4-4-3 2-3-4z" fill="#f0a32a"/><path d="M11 28h3l2-4 2 4 3-5 3 4 3-4 3 5 2-4 2 4h3v3H11z" fill="#f2280f"/><ellipse cx="6" cy="29" rx="6" ry="12" fill="#1612e6"/><ellipse cx="42" cy="29" rx="6" ry="12" fill="#1612e6"/></svg></div>
<div class="appcell d-flex align-items-center justify-content-center"><svg width="48" height="48" viewBox="0 0 48 48"><path d="M36 0 5 31q-2 1-4-1l-1-2q-1-2 1-3z" fill="#1c84cc"/><path d="M0 19q-1-2 1-3l2-2q2-1 4 1l29 22v11z" fill="#0f6db8"/><path d="m35 0 12 5q1 1 1 3v32q0 2-2 3l-11 5z" fill="#2aa7f2"/></svg></div>

<div class="tray ms-auto d-flex align-items-center">
<svg width="26" height="14" viewBox="0 0 26 14"><path d="m1 13 12-11 12 11" fill="none" stroke="#fff" stroke-width="2.200"/></svg>
<svg style="margin-left:34px" width="32" height="28" viewBox="0 0 32 28"><circle cx="17" cy="9" r="8.500" fill="#8f99ad"/><path d="M6 22a7 8 0 0 1 0-13q8-5 13 3l-4 10z" fill="#ced4dd"/><path d="M2 19q7-4 14 0l-2 4H6z" fill="#fff"/><circle cx="23" cy="19" r="9" fill="#50c3fb"/><path d="M23 17v8M23 12.500v2.500" stroke="#10234b" stroke-width="2.600"/></svg>
<svg style="margin-left:32px" width="32" height="34" viewBox="0 0 32 34"><path d="M1 17A14 14 0 0 1 28 10M29 1v10H18M2 34V25h10M3 25q5 7 13 8" fill="none" stroke="#fff" stroke-width="2.200"/><circle cx="24" cy="25" r="8" fill="#f00"/></svg>
<svg style="margin-left:32px" width="32" height="26" viewBox="0 0 32 26"><g fill="none" stroke="#fff" stroke-width="2.300"><path d="M1 10Q16-6 31 10M5.500 14.500q10.500-11 21 0M10 19q6-6.500 12 0"/></g><circle cx="16" cy="22" r="3" fill="#fff"/></svg>
<svg style="margin-left:16px" width="34" height="28" viewBox="0 0 34 28"><g fill="none" stroke="#fff" stroke-width="2.100"><path d="M1 9.500h5L13 3v22l-7-6.500H1zM17 9q3.500 5 0 10M21.500 5.500q6 8.500 0 17M26 2q8.500 12 0 24" stroke-linejoin="round"/></g></svg>
<div class="when text-end"><div>11:04 AM</div><div>7/21/2025</div></div>
<svg width="26" height="28" viewBox="0 0 26 28"><path d="M12 1a13 13 0 1 1-11 21q14-3 11-21z" fill="none" stroke="#fff" stroke-width="2.200" stroke-linejoin="round"/></svg>
</div>
</footer>

<div class="bub one d-flex align-items-center justify-content-center"><svg width="32" height="32" viewBox="0 0 32 32"><path d="M0 8.500Q0 2 7 1v3q-2 .6-2 2.500a3.500 3.500 0 1 1-5 3zM10 8.500Q10 2 17 1v3q-2 .6-2 2.500a3.500 3.500 0 1 1-5 3z" fill="currentColor" stroke="currentColor" stroke-width="1.200"/><path d="M22 4h10M22 12h10M0 20.500h32M0 29h32" stroke="currentColor" stroke-width="3.400"/></svg></div>
<div class="bub two d-flex align-items-center justify-content-center"><svg width="38" height="38" viewBox="0 0 38 38" fill="currentColor"><path d="M14 6q3 10 13 13-10 3-13 13Q11 22 1 19q10-3 13-13zM31.500 0q1.500 5.500 6.500 7-5 1.500-6.500 7-1.500-5.500-6.500-7 5-1.500 6.500-7zM31.500 24q1.500 5.500 6.500 7-5 1.500-6.500 7-1.500-5.500-6.500-7 5-1.500 6.500-7z"/></svg></div>
<div class="lov d-flex align-items-center"><span>Edit with</span><svg class="heart" width="20" height="21" viewBox="0 0 32 32" preserveAspectRatio="none"><use href="#lovable"/></svg><b>Lovable</b><svg class="shut" width="12" height="12" viewBox="0 0 12 12"><path d="m1 1 10 10M11 1 1 11" stroke="#b0b0b8" stroke-width="2.400"/></svg></div>
</body>
</html>
